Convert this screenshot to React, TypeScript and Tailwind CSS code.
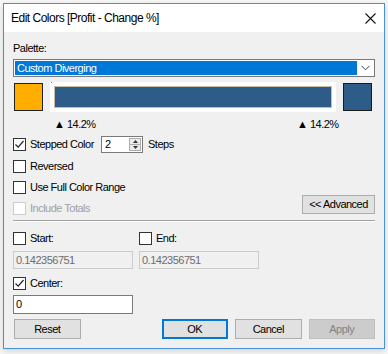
import React from 'react';

const font = { fontFamily: '"Liberation Sans", Arial, sans-serif' };

const Check = ({ checked, disabled }: { checked?: boolean; disabled?: boolean }) => (
  <span
    className={`flex h-[13px] w-[13px] shrink-0 items-center justify-center border bg-white ${
      disabled ? 'border-[#cccccc]' : 'border-[#333333]'
    }`}
  >
    {checked && (
      <svg width="11" height="11" viewBox="0 0 11 11">
        <path d="M1.5 5.5 L4.2 8.2 L9.5 2" fill="none" stroke="#222" strokeWidth="1.2" />
      </svg>
    )}
  </span>
);

const CheckRow = ({ label, checked, disabled, className = '' }: { label: string; checked?: boolean; disabled?: boolean; className?: string }) => (
  <div className={`flex h-[16px] items-center gap-[4px] whitespace-nowrap ${className}`}>
    <Check checked={checked} disabled={disabled} />
    <span className={disabled ? 'text-[#a0a0a0]' : 'text-black'}>{label}</span>
  </div>
);

const Btn = ({ label, variant = 'normal', className = '' }: { label: string; variant?: 'normal' | 'default' | 'disabled'; className?: string }) => {
  const styles =
    variant === 'default'
      ? 'border-2 border-[#0078d7] bg-[#e1e1e1] text-black'
      : variant === 'disabled'
      ? 'border border-[#bfbfbf] bg-[#cccccc] text-[#838383]'
      : 'border border-[#adadad] bg-[#e1e1e1] text-black';
  return (
    <div className={`flex h-[20px] w-[67px] items-center justify-center ${styles} ${className}`}>{label}</div>
  );
};

export default function App() {
  return (
    <div className="h-[354px] w-[388px] overflow-hidden bg-[#f7f7f7] pl-[3px] pt-[3px] text-[11px] leading-none tracking-[-0.5px]" style={font}>
      <div className="flex h-[346px] w-[382px] flex-col border border-[#4a90d9] bg-[#f0f0f0] shadow-[0_2px_6px_rgba(0,0,0,0.15)]">
        {/* title bar */}
        <div className="flex h-[28px] shrink-0 items-center justify-between bg-white pl-[7px] pr-[8px]">
          <span className="text-[12px] tracking-[-0.5px] text-black">Edit Colors [Profit - Change %]</span>
          <svg width="11" height="11" viewBox="0 0 11 11">
            <path d="M0.5 0.5 L10.5 10.5 M10.5 0.5 L0.5 10.5" stroke="#111" strokeWidth="1.1" />
          </svg>
        </div>

        {/* body */}
        <div className="flex flex-col pl-[9px] pr-[9px]">
          <div className="mt-[8px] flex h-[16px] items-center">Palette:</div>

          <div className="mt-[3px] flex h-[18px] w-[362px] items-center border border-[#7a7a7a] bg-white p-[1px]">
            <div className="flex h-full flex-1 items-center bg-[#0078d7] pl-[2px] text-white">Custom Diverging</div>
            <div className="flex w-[16px] items-center justify-center">
              <svg width="9" height="6" viewBox="0 0 9 6">
                <path d="M0.5 0.8 L4.5 4.8 L8.5 0.8" fill="none" stroke="#444" strokeWidth="1" />
              </svg>
            </div>
          </div>

          {/* swatches */}
          <div className="mt-[5px] flex h-[30px] items-center">
            <div className="ml-[1px] h-[28px] w-[29px] border border-[#222] bg-[#ffae00]" />
            <div className="relative ml-[7px] flex h-[30px] w-[286px] items-center justify-center bg-white">
              <span className="absolute left-[1px] top-0 h-[1px] w-[1px] bg-[#777]" />
              <div className="h-[22px] w-[278px] border border-[#c9bea5] bg-[#2d5c89]" />
            </div>
            <div className="ml-[7px] h-[28px] w-[29px] border border-[#1a1a1a] bg-[#2d5c89]" />
          </div>

          <div className="mt-[4px] flex h-[16px] items-center whitespace-nowrap">
            <span className="ml-[41px] w-[243px]">▲ 14.2%</span>
            <span>▲ 14.2%</span>
          </div>

          {/* stepped */}
          <div className="mt-[4px] flex h-[16px] items-center">
            <CheckRow label="Stepped Color" checked className="w-[88px]" />
            <div className="flex h-[17px] w-[42px] items-center border border-[#7a7a7a] bg-white">
              <span className="flex-1 pl-[3px]">2</span>
              <div className="mr-[1px] flex h-[13px] w-[12px] flex-col border border-[#adadad] bg-[#ececec]">
                <div className="flex flex-1 items-center justify-center border-b border-[#adadad]">
                  <svg width="5" height="3" viewBox="0 0 5 3"><path d="M0 3 L2.5 0 L5 3Z" fill="#333" /></svg>
                </div>
                <div className="flex flex-1 items-center justify-center">
                  <svg width="5" height="3" viewBox="0 0 5 3"><path d="M0 0 L2.5 3 L5 0Z" fill="#333" /></svg>
                </div>
              </div>
            </div>
            <span className="ml-[5px]">Steps</span>
          </div>

          <CheckRow label="Reversed" className="mt-[6px]" />
          <CheckRow label="Use Full Color Range" className="mt-[5px]" />

          <div className="flex h-[20px] items-end justify-between">
            <CheckRow label="Include Totals" disabled className="mb-[-1px]" />
            <div className="mb-[1px] flex h-[19px] w-[73px] items-center justify-center border border-[#adadad] bg-[#e1e1e1]">&lt;&lt; Advanced</div>
          </div>

          <div className="mt-[5px] h-[1px] w-[362px] bg-[#a0a0a0] shadow-[0_1px_0_#ffffff]" />

          {/* start / end */}
          <div className="mt-[9px] flex h-[16px] items-center">
            <CheckRow label="Start:" className="w-[126px]" />
            <CheckRow label="End:" />
          </div>
          <div className="mt-[5px] flex gap-[6px]">
            <div className="flex h-[18px] w-[120px] items-center border border-[#cccccc] bg-[#f0f0f0] pl-[2px] text-[#6d6d6d]">0.142356751</div>
            <div className="flex h-[18px] w-[120px] items-center border border-[#cccccc] bg-[#f0f0f0] pl-[2px] text-[#6d6d6d]">0.142356751</div>
          </div>

          <CheckRow label="Center:" checked className="mt-[6px]" />
          <div className="mt-[4px] flex h-[19px] w-[120px] items-center border border-[#7a7a7a] bg-white pl-[2px]">0</div>

          {/* buttons */}
          <div className="mt-[5px] flex h-[20px] items-center">
            <Btn label="Reset" className="ml-[1px]" />
            <Btn label="OK" variant="default" className="ml-[81px]" />
            <Btn label="Cancel" className="ml-[7px]" />
            <Btn label="Apply" variant="disabled" className="ml-[7px]" />
          </div>
        </div>
      </div>
    </div>
  );
}
